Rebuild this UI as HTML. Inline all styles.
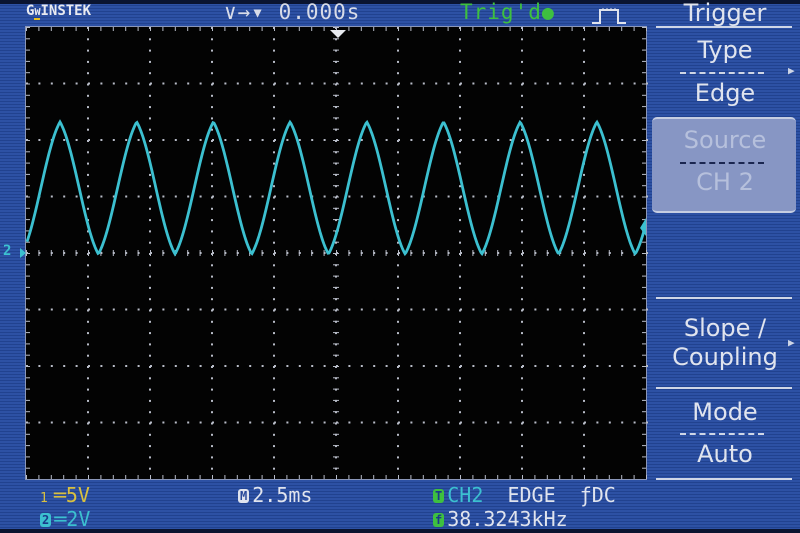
<!DOCTYPE html>
<html><head><meta charset="utf-8"><style>
html,body{margin:0;padding:0;}
body{width:800px;height:533px;overflow:hidden;position:relative;background:#28489a;
background-image:repeating-linear-gradient(180deg,#2d51a4 0px,#2d51a4 2px,#21428f 2px,#21428f 3px);
font-family:"DejaVu Sans Mono","Liberation Mono",monospace;color:#d8dce8;}
.t{position:absolute;white-space:nowrap;}
.m{position:absolute;left:650px;width:150px;text-align:center;font-family:"DejaVu Sans","Liberation Sans",sans-serif;font-size:24px;color:#e0e4ee;}
.ln{position:absolute;left:656px;width:136px;height:2px;background:#cfd6e6;}
.dash{position:absolute;left:680px;width:84px;border-top:2px dashed #cfd6e6;}
.b{font-size:12px;border-radius:3px;padding:0 2px;margin-right:3px;vertical-align:2px;font-weight:bold}
</style></head><body>
<div style="position:absolute;left:0;top:0;width:800px;height:4px;background:#0a1430"></div>
<div style="position:absolute;left:0;top:529px;width:800px;height:4px;background:#0a1430"></div>
<svg style="position:absolute;left:0;top:0" width="800" height="533" id="s">
<rect x="26" y="27" width="620" height="452" fill="#030303"/>
<rect x="25.5" y="26.5" width="621" height="453" fill="none" stroke="#8a96b8" stroke-width="1"/>
<g id="g" fill="#b8bcc8"></g>
<polyline id="w" fill="none" stroke="#3cc0d0" stroke-width="2.8"/>
<polygon points="330,30 346,30 338,38" fill="#e8eaf0"/>
<polygon points="640,228 646,218 646,236" fill="#3cc0d0"/>
<polygon points="20,248 26,253 20,258" fill="#3cc0d0"/>
</svg>
<div class="t" style="left:3px;top:243px;font-size:14px;color:#3cc0d0;font-weight:bold">2</div>
<div class="t" style="left:26px;top:3px;font-size:14px;font-weight:bold;color:#e8eaf0">G<span style="border-bottom:2px solid #e8c020;font-size:10px">W</span>INSTEK</div>
<div class="t" style="left:224px;top:0px;font-size:21px;color:#d8dce8;letter-spacing:1px">∨→▾ 0.000s</div>
<div class="t" style="left:460px;top:0px;font-size:21px;color:#3ec040;letter-spacing:1px">Trig'd<span style="font-size:20px">●</span></div>
<svg style="position:absolute;left:590px;top:5px" width="40" height="20"><path d="M2 18H10V5H28V18H36" fill="none" stroke="#e0e4ee" stroke-width="2"/><path d="M13 3v3M17 3v3M21 3v3M25 3v3" stroke="#e0e4ee"/></svg>
<div class="m" style="top:-1px">Trigger</div>
<div class="ln" style="top:26px"></div>
<div class="m" style="top:36px">Type</div>
<div class="dash" style="top:72px"></div>
<div class="t" style="left:788px;top:64px;font-size:11px;color:#cfd6e6">▶</div>
<div class="m" style="top:79px">Edge</div>
<div style="position:absolute;left:652px;top:117px;width:144px;height:92px;background:#8796c4;border-radius:5px;border-top:2px solid #c6cee2;border-bottom:2px solid #c6cee2"></div>
<div class="m" style="top:126px;color:#b6c0dc">Source</div>
<div class="dash" style="top:162px;border-color:#1a2650"></div>
<div class="m" style="top:168px;color:#b6c0dc">CH 2</div>
<div class="ln" style="top:297px"></div>
<div class="m" style="top:314px">Slope /</div>
<div class="m" style="top:343px">Coupling</div>
<div class="t" style="left:788px;top:336px;font-size:11px;color:#cfd6e6">▶</div>
<div class="ln" style="top:387px"></div>
<div class="m" style="top:398px">Mode</div>
<div class="dash" style="top:433px"></div>
<div class="m" style="top:440px">Auto</div>
<div class="ln" style="top:478px"></div>
<div class="t" style="left:40px;top:483px;font-size:20px;color:#d8c040"><span style="font-size:13px;margin-right:6px">1</span>═5V</div>
<div class="t" style="left:40px;top:507px;font-size:20px;color:#3cc0d0"><span class="b" style="background:#3cc0d0;color:#1a3a8a">2</span>═2V</div>
<div class="t" style="left:238px;top:483px;font-size:20px;color:#e0e4ee"><span class="b" style="background:#e0e4ee;color:#2a4a9a">M</span>2.5ms</div>
<div class="t" style="left:433px;top:483px;font-size:20px;color:#3cc0d0"><span class="b" style="background:#3ec040;color:#1a3a8a">T</span>CH2 <span style="color:#e0e4ee">&nbsp;EDGE &nbsp;ƒDC</span></div>
<div class="t" style="left:433px;top:507px;font-size:20px;color:#e0e4ee"><span class="b" style="background:#3ec040;color:#1a3a8a">f</span>38.3243kHz</div>
<script>
var ns="http://www.w3.org/2000/svg",g=document.getElementById('g');
function d(x,y,w,h){var r=document.createElementNS(ns,'rect');r.setAttribute('x',x);r.setAttribute('y',y);r.setAttribute('width',w||2);r.setAttribute('height',h||2);g.appendChild(r);}
var L=26,T=27,W=620,H=452,dx=W/10,dy=H/8;
for(var i=1;i<10;i++){var x=L+i*dx;for(var y=T;y<T+H;y+=H/40){d(x-1,y);} }
for(var j=1;j<8;j++){var y=T+j*dy;for(var x=L;x<L+W;x+=W/50){d(x,y-1);} }
for(var x=L;x<L+W;x+=W/50){d(x,T,1,4);d(x,T+H-4,1,4);}
for(var y=T;y<T+H;y+=H/40){d(L,y,4,1);d(L+W-4,y,4,1);}
var cx=L+5*dx;for(var y=T;y<T+H;y+=H/40)d(cx-3,y,6,1);
var cy=T+4*dy;for(var x=L;x<L+W;x+=W/50)d(x,cy-3,1,6);
var p=[],P=76.7;for(var x=27;x<=644;x+=1){var u=(x-60)/P;var f=((u%1)+1)%1;var c=Math.cos(u*2*Math.PI);var tr=4*Math.abs(f-0.5)-1;var v=0.5*c+0.5*tr;p.push(x+','+(188-66*v).toFixed(1));}
document.getElementById('w').setAttribute('points',p.join(' '));
</script>
</body></html>
